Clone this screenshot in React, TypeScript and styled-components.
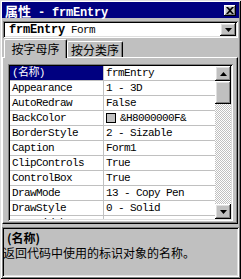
import React from 'react';
import styled, { createGlobalStyle, css } from 'styled-components';

const GlobalStyle = createGlobalStyle`
  html, body {
    margin: 0;
    padding: 0;
    background: #c0c0c0;
  }
  body {
    font-family: "Liberation Mono", "Noto Sans CJK SC", monospace;
  }
`;

const raised = css`
  box-shadow: inset -1px -1px #000, inset 1px 1px #fff, inset -2px -2px #808080,
    inset 2px 2px #dfdfdf;
`;

const sunken = css`
  box-shadow: inset 1px 1px #808080, inset -1px -1px #fff, inset 2px 2px #000,
    inset -2px -2px #dfdfdf;
`;

type Prop = { name: string; value: string; swatch?: boolean };

const props: Prop[] = [
  { name: '(名称)', value: 'frmEntry' },
  { name: 'Appearance', value: '1 - 3D' },
  { name: 'AutoRedraw', value: 'False' },
  { name: 'BackColor', value: '&H8000000F&', swatch: true },
  { name: 'BorderStyle', value: '2 - Sizable' },
  { name: 'Caption', value: 'Form1' },
  { name: 'ClipControls', value: 'True' },
  { name: 'ControlBox', value: 'True' },
  { name: 'DrawMode', value: '13 - Copy Pen' },
  { name: 'DrawStyle', value: '0 - Solid' },
  { name: 'DrawWidth', value: '1' },
];

export default function App() {
  return (
    <>
      <GlobalStyle />
      <Window>
        <TitleBar>
          <TitleText>
            <Cjk>属性</Cjk> - frmEntry
          </TitleText>
          <CloseButton>
            <svg width="8" height="7" viewBox="0 0 8 7">
              <path d="M0 0h2l2 2 2-2h2L5 3.5 8 7H6L4 5 2 7H0l3-3.5z" fill="#000" />
            </svg>
          </CloseButton>
        </TitleBar>

        <Combo>
          <ComboText>
            <b>frmEntry</b> Form
          </ComboText>
          <ArrowButton>
            <svg width="7" height="4" viewBox="0 0 7 4">
              <path d="M0 0h7L3.5 4z" fill="#000" />
            </svg>
          </ArrowButton>
        </Combo>

        <TabStrip>
          <Tab $active $width={63}>按字母序</Tab>
          <Tab $width={56}>按分类序</Tab>
        </TabStrip>

        <Panel>
          <Grid>
            <Rows>
              {props.map((p, i) => (
                <Row key={p.name}>
                  <NameCell $selected={i === 0}>{p.name}</NameCell>
                  <ValueCell>
                    {p.swatch && <Swatch />}
                    {p.value}
                  </ValueCell>
                </Row>
              ))}
            </Rows>
            <ScrollBar>
              <ScrollButton>
                <svg width="7" height="4" viewBox="0 0 7 4">
                  <path d="M3.5 0L7 4H0z" fill="#000" />
                </svg>
              </ScrollButton>
              <Thumb />
              <Track />
              <ScrollButton>
                <svg width="7" height="4" viewBox="0 0 7 4">
                  <path d="M0 0h7L3.5 4z" fill="#000" />
                </svg>
              </ScrollButton>
            </ScrollBar>
          </Grid>
        </Panel>

        <Description>
          <DescTitle>(名称)</DescTitle>
          <DescText>返回代码中使用的标识对象的名称。</DescText>
        </Description>
      </Window>
    </>
  );
}

const Window = styled.div`
  width: 241px;
  height: 279px;
  box-sizing: border-box;
  padding: 2px;
  background: #c0c0c0;
  box-shadow: inset 1px 1px #dfdfdf, inset -1px -1px #000, inset 2px 2px #fff,
    inset -2px -2px #808080;
  display: flex;
  flex-direction: column;
`;

const TitleBar = styled.div`
  height: 16px;
  background: #000080;
  color: #fff;
  display: flex;
  align-items: center;
  padding: 0 3px 0 3px;
`;

const TitleText = styled.span`
  font-size: 12px;
  font-weight: bold;
  letter-spacing: -0.2px;
  white-space: pre;
`;

const Cjk = styled.span`
  font-family: "Noto Sans CJK SC", sans-serif;
  font-size: 13px;
  letter-spacing: 0;
`;

const CloseButton = styled.div`
  margin-left: auto;
  width: 12px;
  height: 11px;
  background: #c0c0c0;
  ${raised};
  display: flex;
  align-items: center;
  justify-content: center;
`;

const Combo = styled.div`
  margin: 3px 1px 0;
  height: 17px;
  box-sizing: border-box;
  padding: 2px;
  background: #fff;
  ${sunken};
  display: flex;
  align-items: center;
`;

const ComboText = styled.div`
  flex: 1;
  padding-left: 4px;
  font-size: 11px;
  letter-spacing: -0.6px;
  white-space: pre;
  b {
    font-size: 12px;
    letter-spacing: -0.2px;
  }
`;

const ArrowButton = styled.div`
  width: 16px;
  height: 13px;
  background: #c0c0c0;
  ${raised};
  display: flex;
  align-items: center;
  justify-content: center;
`;

const TabStrip = styled.div`
  display: flex;
  align-items: flex-end;
  height: 18px;
  margin-top: 1px;
  padding-left: 2px;
  position: relative;
  z-index: 1;
`;

const Tab = styled.div<{ $active?: boolean; $width: number }>`
  width: ${(p) => p.$width}px;
  height: ${(p) => (p.$active ? 19 : 16)}px;
  margin-bottom: ${(p) => (p.$active ? -1 : 0)}px;
  box-sizing: border-box;
  background: #c0c0c0;
  border-top: 1px solid #fff;
  border-left: 1px solid #fff;
  border-right: 1px solid #000;
  border-radius: 2px 2px 0 0;
  box-shadow: inset -1px 0 #808080;
  font-family: "Noto Sans CJK SC", sans-serif;
  font-size: 12px;
  line-height: 14px;
  display: flex;
  align-items: center;
  justify-content: center;
`;

const Panel = styled.div`
  height: 167px;
  box-sizing: border-box;
  margin-right: 1px;
  padding: 6px 4px 2px 5px;
  border-top: 1px solid #fff;
  border-left: 1px solid #fff;
  border-right: 1px solid #000;
  border-bottom: 1px solid #000;
  box-shadow: inset -1px -1px #808080;
  display: flex;
`;

const Grid = styled.div`
  flex: 1;
  padding: 2px;
  background: #fff;
  ${sunken};
  display: flex;
  overflow: hidden;
`;

const Rows = styled.div`
  flex: 1;
  overflow: hidden;
`;

const Row = styled.div`
  display: flex;
  height: 14px;
  border-bottom: 1px solid #c0c0c0;
  font-size: 11px;
  line-height: 14px;
  letter-spacing: -0.6px;
  white-space: pre;
`;

const NameCell = styled.div<{ $selected?: boolean }>`
  width: 94px;
  box-sizing: border-box;
  padding-left: 2px;
  border-right: 1px solid #c0c0c0;
  background: ${(p) => (p.$selected ? '#000080' : '#fff')};
  color: ${(p) => (p.$selected ? '#fff' : '#000')};
`;

const ValueCell = styled.div`
  flex: 1;
  padding-left: 2px;
  display: flex;
  align-items: center;
`;

const Swatch = styled.span`
  width: 8px;
  height: 8px;
  border: 1px solid #000;
  background: #c0c0c0;
  margin-right: 4px;
`;

const ScrollBar = styled.div`
  width: 16px;
  display: flex;
  flex-direction: column;
`;

const ScrollButton = styled.div`
  height: 15px;
  background: #c0c0c0;
  ${raised};
  display: flex;
  align-items: center;
  justify-content: center;
`;

const Thumb = styled.div`
  height: 23px;
  background: #c0c0c0;
  ${raised};
`;

const Track = styled.div`
  flex: 1;
  background: repeating-conic-gradient(#c0c0c0 0 25%, #fff 0 50%) 0 0 / 2px 2px;
`;

const Description = styled.div`
  flex: 1;
  margin-top: 3px;
  padding: 4px 3px 0 1px;
  ${sunken};
  font-family: "Noto Sans CJK SC", sans-serif;
  font-size: 12px;
  display: flex;
  flex-direction: column;
  gap: 1px;
`;

const DescTitle = styled.div`
  font-weight: bold;
  line-height: 14px;
  padding-left: 4px;
`;

const DescText = styled.div`
  line-height: 14px;
  white-space: nowrap;
`;
